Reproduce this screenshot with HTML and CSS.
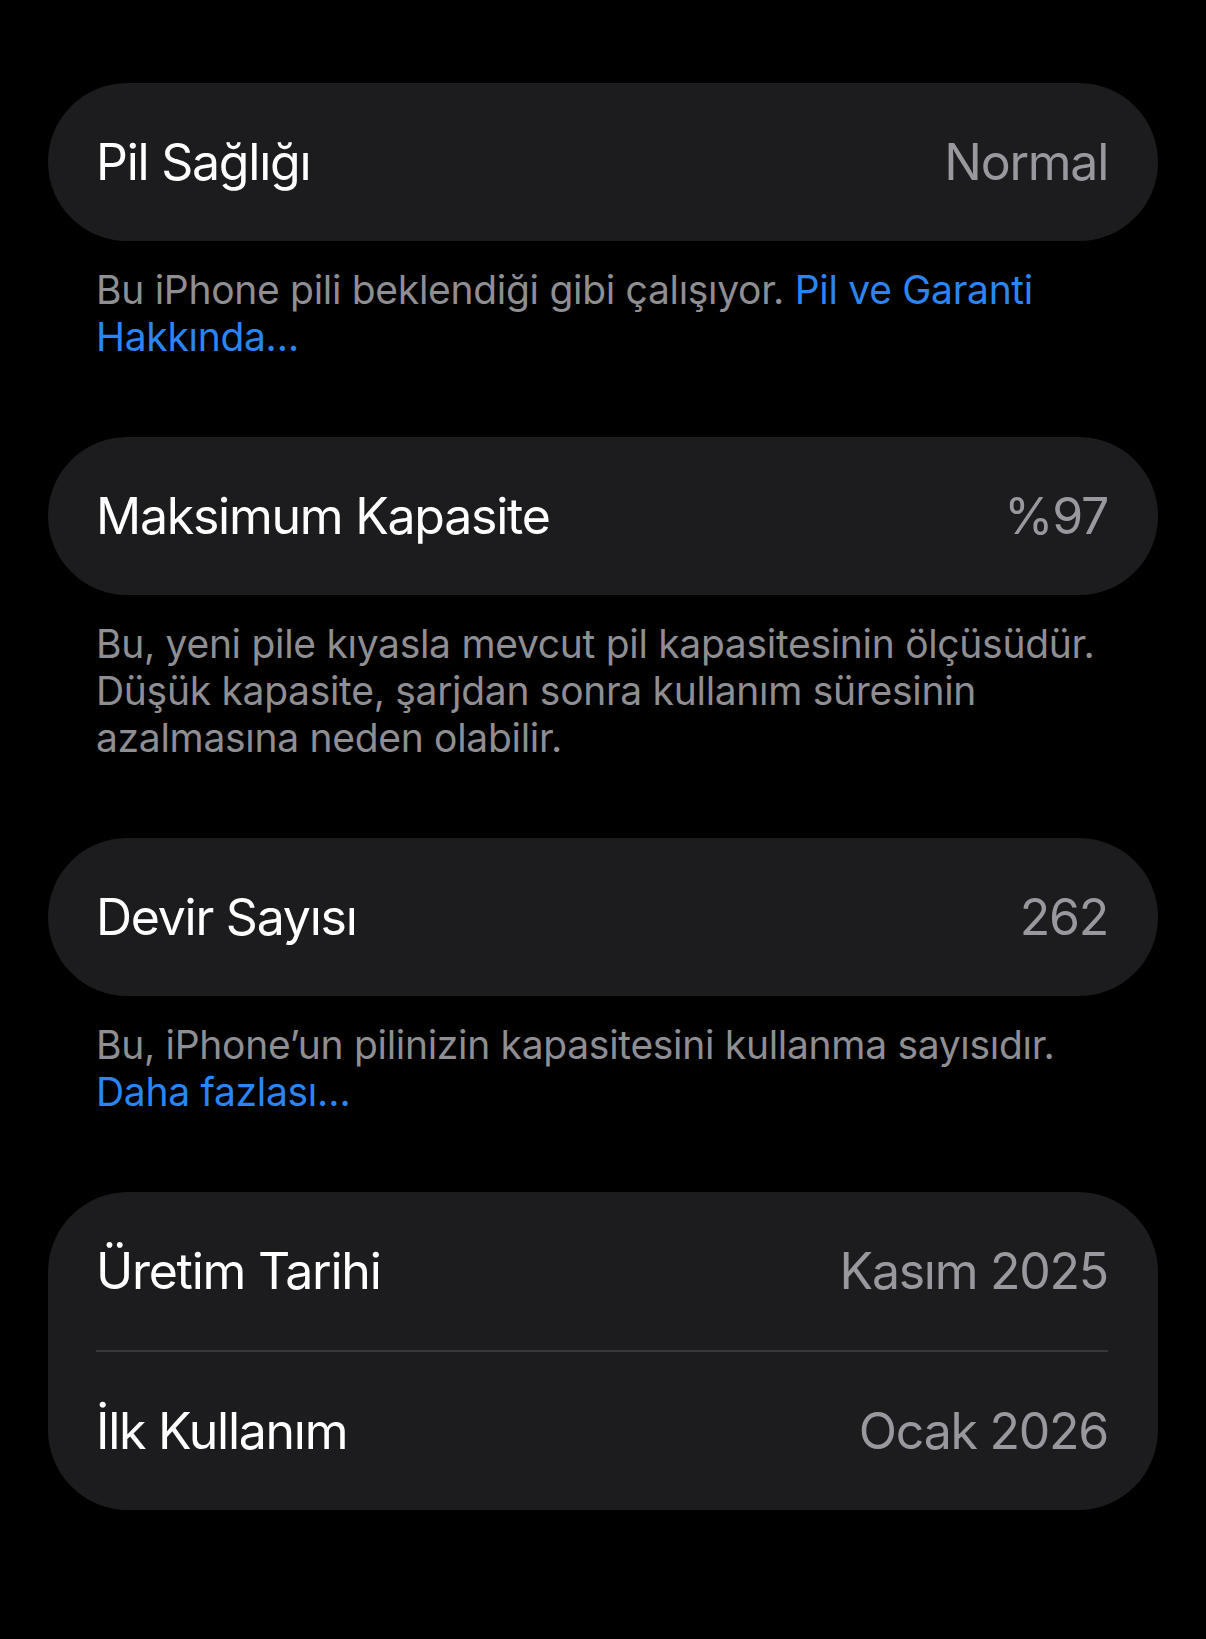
FILE: index.html
```html
<!DOCTYPE html>
<html lang="tr">
<head>
    <meta charset="UTF-8">
    <meta name="viewport" content="width=device-width, initial-scale=1.0">
    <title>Pil Sağlığı</title>
    <link rel="stylesheet" href="styles.css">
</head>
<body>
    <main class="settings">
        <section class="group">
            <div class="card">
                <div class="row">
                    <span class="label">Pil Sağlığı</span>
                    <span class="value">Normal</span>
                </div>
            </div>
            <p class="note">Bu iPhone pili beklendiği gibi çalışıyor. <a href="#">Pil ve Garanti Hakkında…</a></p>
        </section>

        <section class="group">
            <div class="card">
                <div class="row">
                    <span class="label">Maksimum Kapasite</span>
                    <span class="value">%97</span>
                </div>
            </div>
            <p class="note">Bu, yeni pile kıyasla mevcut pil kapasitesinin ölçüsüdür. Düşük kapasite, şarjdan sonra kullanım süresinin azalmasına neden olabilir.</p>
        </section>

        <section class="group">
            <div class="card">
                <div class="row">
                    <span class="label">Devir Sayısı</span>
                    <span class="value">262</span>
                </div>
            </div>
            <p class="note">Bu, iPhone’un pilinizin kapasitesini kullanma sayısıdır. <a href="#">Daha fazlası…</a></p>
        </section>

        <section class="group">
            <div class="card">
                <div class="row">
                    <span class="label">Üretim Tarihi</span>
                    <span class="value">Kasım 2025</span>
                </div>
                <div class="row">
                    <span class="label">İlk Kullanım</span>
                    <span class="value">Ocak 2026</span>
                </div>
            </div>
        </section>
    </main>
</body>
</html>
```

FILE: styles.css
```css
:root {
    --bg: #000000;
    --card: #1c1c1e;
    --label: #ffffff;
    --secondary: #8e8e93;
    --value: #98989e;
    --separator: #38383c;
    --link: #2a86f6;
}

body {
    margin: 0;
    background: var(--bg);
    font-family: Inter, "Noto Sans", sans-serif;
    color: var(--label);
}

.settings {
    padding: 83px 48px 0;
}

.group {
    margin-bottom: 77px;
}

.card {
    background-color: var(--card);
    border-radius: 80px;
    padding: 0 50px 0 48px;
}

.row {
    display: flex;
    justify-content: space-between;
    align-items: center;
    height: 158px;
    font-size: 50px;
    letter-spacing: -1.25px;
}

.row + .row {
    border-top: 2px solid var(--separator);
}

.value {
    color: var(--value);
}

.note {
    margin: 0;
    padding: 25px 48px 0 48px;
    font-size: 39px;
    line-height: 47px;
    letter-spacing: -0.3px;
    color: var(--secondary);
}

.note a {
    color: var(--link);
    text-decoration: none;
}
```
